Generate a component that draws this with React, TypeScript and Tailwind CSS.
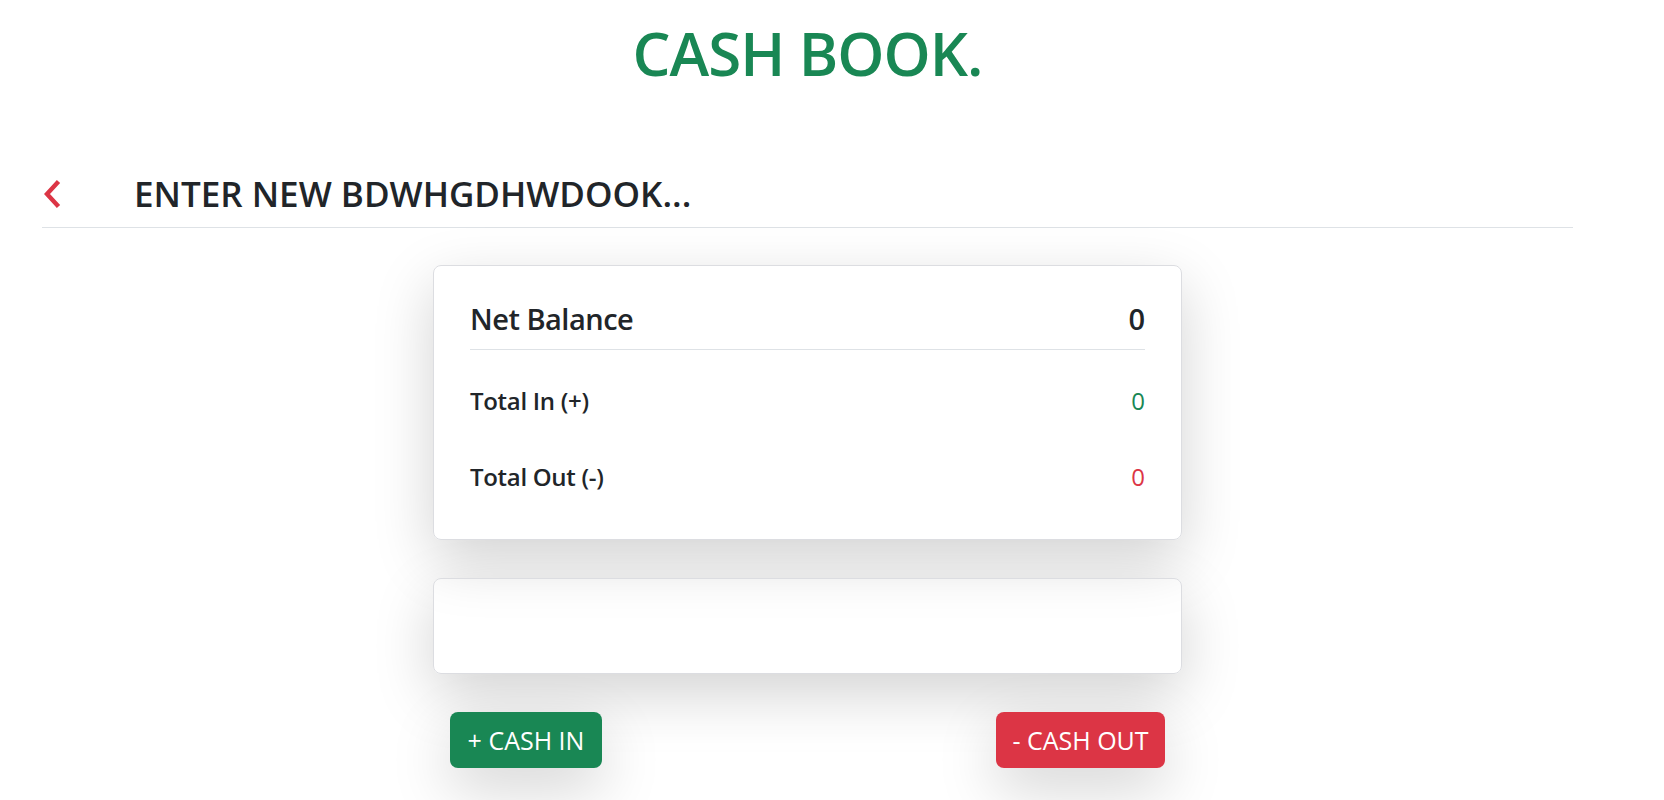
import React from "react";

const font = { fontFamily: '"Open Sans", "Noto Sans", sans-serif' };

function ChevronLeft() {
  return (
    <svg width="18" height="28" viewBox="0 0 18 28" fill="none" className="shrink-0">
      <path d="M15.5 1.5 L4 14 L15.5 26.5" stroke="#dc3545" strokeWidth="4.4" strokeLinecap="butt" strokeLinejoin="miter" />
    </svg>
  );
}

function Row({ label, value, color }: { label: string; value: string; color: string }) {
  return (
    <div className="flex items-center justify-between">
      <span className="text-[24px] leading-[30px] font-semibold tracking-[-0.3px] text-[#212529]">{label}</span>
      <span className={`text-[24px] leading-[30px] ${color}`}>{value}</span>
    </div>
  );
}

export default function App() {
  return (
    <div className="min-h-screen bg-white text-[#212529]" style={font}>
      <div className="ml-[42px] w-[1531px]">
        <h1 className="pt-[23px] text-center text-[60px] leading-[60px] font-semibold tracking-[-1px] text-[#198754]">
          CASH BOOK.
        </h1>

        <div className="mt-[90px] flex items-center border-b border-[#dee2e6] pb-[12px]">
          <div className="w-[92px] pl-[1px]">
            <ChevronLeft />
          </div>
          <h3 className="text-[35px] leading-[42px] font-semibold text-[#212529]">
            ENTER NEW BDWHGDHWDOOK...
          </h3>
        </div>

        <div className="mx-auto mt-[37px] w-[749px]">
          <div className="rounded-[8px] border border-[#dcdde1] px-[36px] pt-[35px] pb-[47px] shadow-[0_20px_60px_rgba(0,0,0,0.175)]">
            <div className="flex items-center justify-between border-b border-[#dee2e6] pb-[12px]">
              <span className="text-[29px] leading-[36px] font-semibold tracking-[-0.5px]">Net Balance</span>
              <span className="text-[29px] leading-[36px] font-semibold">0</span>
            </div>
            <div className="mt-[36px]">
              <Row label="Total In (+)" value="0" color="text-[#198754]" />
            </div>
            <div className="mt-[46px]">
              <Row label="Total Out (-)" value="0" color="text-[#dc3545]" />
            </div>
          </div>

          <div className="mt-[38px] h-[96px] rounded-[8px] border border-[#dcdde1] shadow-[0_20px_60px_rgba(0,0,0,0.175)]" />

          <div className="mt-[38px] flex justify-between px-[17px]">
            <button className="flex h-[56px] w-[152px] items-center justify-center rounded-[8px] bg-[#198754] text-[25px] leading-[30px] text-white shadow-[0_20px_60px_rgba(0,0,0,0.175)]">
              + CASH IN
            </button>
            <button className="flex h-[56px] w-[169px] items-center justify-center rounded-[8px] bg-[#dc3545] text-[25px] leading-[30px] text-white shadow-[0_20px_60px_rgba(0,0,0,0.175)]">
              - CASH OUT
            </button>
          </div>
        </div>
      </div>
    </div>
  );
}
